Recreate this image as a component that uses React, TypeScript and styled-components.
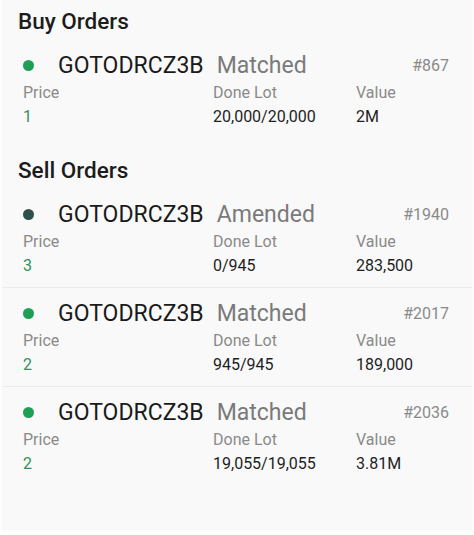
import React from "react";
import styled, { createGlobalStyle } from "styled-components";

const Global = createGlobalStyle`
  html, body { margin: 0; padding: 0; background: #fdfdfd; }
  body { font-family: Roboto, "Noto Sans", "Liberation Sans", sans-serif; }
`;

const Page = styled.div`
  width: 470px;
  height: 531px;
  margin-left: 2px;
  background: #f9f9f9;
  padding-top: 2px;
  box-sizing: border-box;
`;

const Section = styled.section`
  display: flex;
  flex-direction: column;
  & + & { margin-top: 12px; }
`;

const Title = styled.h2`
  margin: 0;
  height: 38px;
  line-height: 38px;
  padding-left: 16px;
  font-size: 22.5px;
  font-weight: 500;
  color: #1c1c1c;
`;

const Card = styled.div<{ $divider: boolean }>`
  padding: 10px 23px 10px 21px;
  border-bottom: 1px solid ${(p) => (p.$divider ? "#ebebeb" : "transparent")};
  display: flex;
  flex-direction: column;
`;

const Header = styled.div`
  height: 30px;
  display: flex;
  align-items: center;
`;

const Dot = styled.span<{ $color: string }>`
  width: 11px;
  height: 11px;
  border-radius: 50%;
  background: ${(p) => p.$color};
  flex: none;
  margin-right: 24px;
`;

const Symbol = styled.span`
  font-size: 23px;
  color: #1a1a1a;
  margin-right: 13px;
`;

const Status = styled.span`
  font-size: 23px;
  color: #7a7a7a;
`;

const OrderId = styled.span`
  margin-left: auto;
  font-size: 16px;
  color: #8a8a8a;
`;

const Grid = styled.div`
  display: grid;
  grid-template-columns: 190px 143px 1fr;
  grid-auto-rows: 24px;
  align-items: center;
  font-size: 16px;
`;

const Label = styled.span`
  color: #8a8a8a;
`;

const Value = styled.span<{ $accent?: boolean }>`
  color: ${(p) => (p.$accent ? "#2f9158" : "#1e1e1e")};
`;

type Order = {
  id: string;
  status: string;
  dot: string;
  price: string;
  lot: string;
  value: string;
};

const buy: Order[] = [
  { id: "#867", status: "Matched", dot: "#1f9e55", price: "1", lot: "20,000/20,000", value: "2M" },
];

const sell: Order[] = [
  { id: "#1940", status: "Amended", dot: "#2e4f4c", price: "3", lot: "0/945", value: "283,500" },
  { id: "#2017", status: "Matched", dot: "#1f9e55", price: "2", lot: "945/945", value: "189,000" },
  { id: "#2036", status: "Matched", dot: "#1f9e55", price: "2", lot: "19,055/19,055", value: "3.81M" },
];

const OrderCard = ({ o, divider }: { o: Order; divider: boolean }) => (
  <Card $divider={divider}>
    <Header>
      <Dot $color={o.dot} />
      <Symbol>GOTODRCZ3B</Symbol>
      <Status>{o.status}</Status>
      <OrderId>{o.id}</OrderId>
    </Header>
    <Grid>
      <Label>Price</Label>
      <Label>Done Lot</Label>
      <Label>Value</Label>
      <Value $accent>{o.price}</Value>
      <Value>{o.lot}</Value>
      <Value>{o.value}</Value>
    </Grid>
  </Card>
);

export default function App() {
  return (
    <>
      <Global />
      <Page>
        <Section>
          <Title>Buy Orders</Title>
          {buy.map((o, i) => (
            <OrderCard key={o.id} o={o} divider={i < buy.length - 1} />
          ))}
        </Section>
        <Section>
          <Title>Sell Orders</Title>
          {sell.map((o, i) => (
            <OrderCard key={o.id} o={o} divider={i < sell.length - 1} />
          ))}
        </Section>
      </Page>
    </>
  );
}
